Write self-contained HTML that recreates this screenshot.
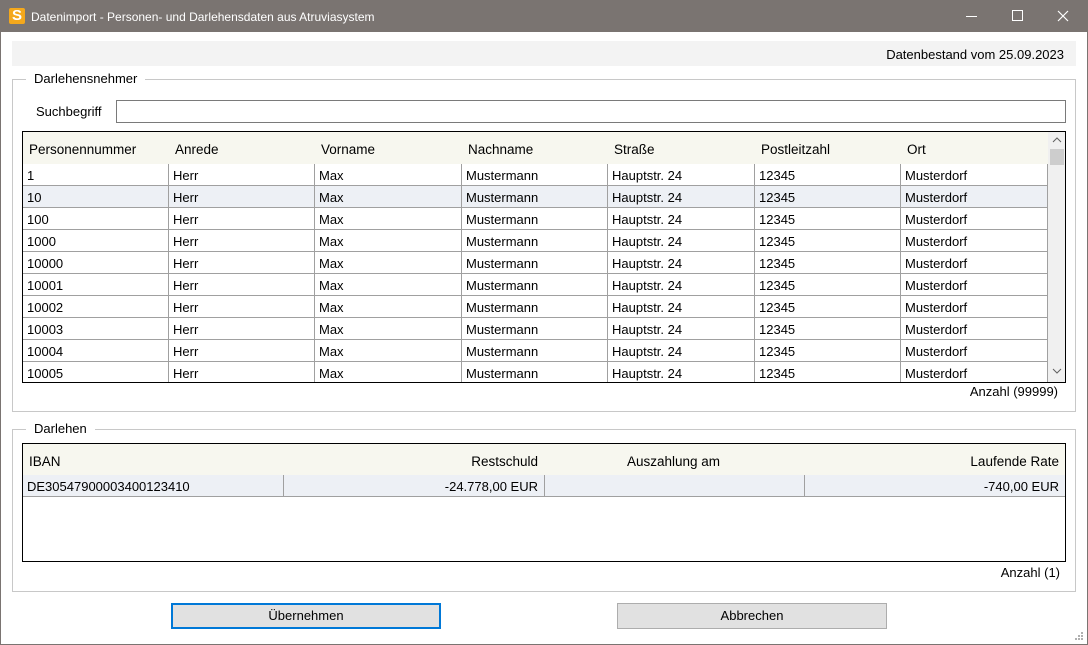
<!DOCTYPE html>
<html><head><meta charset="utf-8"><style>
*{box-sizing:border-box;margin:0;padding:0}
body{width:1088px;height:645px;overflow:hidden;background:#fff;font-family:"Liberation Sans",sans-serif;font-size:13px;color:#000;position:relative}
.a{position:absolute}
.win{left:0;top:0;width:1088px;height:645px;border:1px solid #7a7471;border-top:none}
.title{left:0;top:0;width:1088px;height:32px;background:#7a7471;color:#fff}
.grp{border:1px solid #c8c8c8}
.lbl{background:#fff;padding:0 8px;font-size:13px}
.cell{position:absolute;height:22px;line-height:23px;padding-left:4px;border-right:1px solid #a0a0a0;border-bottom:1px solid #a0a0a0;white-space:nowrap;overflow:hidden}
.hd{position:absolute;line-height:35px;padding-left:6px;font-size:13.5px}
</style></head><body>
<div class="a title">
 <div class="a" style="left:9px;top:8px;width:16px;height:16px;background:#f4a81c;border-radius:2px;color:#fff;font-weight:bold;font-size:15px;line-height:16px;text-align:center">S</div>
 <div class="a" style="left:31px;top:10px;font-size:12px">Datenimport - Personen- und Darlehensdaten aus Atruviasystem</div>
 <div class="a" style="left:966px;top:16px;width:11px;height:1px;background:#fff"></div>
 <div class="a" style="left:1012px;top:10px;width:11px;height:11px;border:1px solid #fff"></div>
 <svg class="a" style="left:1057px;top:10px" width="12" height="12"><path d="M1 1L11 11M11 1L1 11" stroke="#fff" stroke-width="1.2"/></svg>
</div>
<div class="a win" style="top:32px;height:613px"></div>
<div class="a" style="left:12px;top:41px;width:1064px;height:25px;background:#f3f3f3"></div>
<div class="a" style="right:24px;top:47px">Datenbestand vom 25.09.2023</div>

<div class="a grp" style="left:12px;top:79px;width:1064px;height:333px"></div>
<div class="a lbl" style="left:26px;top:71px">Darlehensnehmer</div>
<div class="a" style="left:36px;top:104px">Suchbegriff</div>
<div class="a" style="left:116px;top:100px;width:950px;height:23px;border:1px solid #7a7a7a"></div>

<div class="a" style="left:22px;top:131px;width:1044px;height:252px;border:1px solid #000;overflow:hidden">
 <div class="a" style="left:0;top:0;width:1025px;height:32px;background:#f7f7ef"></div>
 <div id="g1"></div>
 <div class="a" style="left:1025px;top:0;width:18px;height:250px;background:#f0f0f0"></div>
 <div class="a" style="left:1027px;top:17px;width:14px;height:16px;background:#cdcdcd"></div>
 <svg class="a" style="left:1029px;top:5px" width="10" height="6"><path d="M1 5L5 1L9 5" stroke="#606060" fill="none"/></svg>
 <svg class="a" style="left:1029px;top:236px" width="10" height="6"><path d="M1 1L5 5L9 1" stroke="#606060" fill="none"/></svg>
</div>
<div class="a" style="right:30px;top:384px">Anzahl (99999)</div>

<div class="a grp" style="left:12px;top:429px;width:1064px;height:163px"></div>
<div class="a lbl" style="left:26px;top:421px">Darlehen</div>
<div class="a" style="left:22px;top:443px;width:1044px;height:119px;border:1px solid #000;overflow:hidden">
 <div class="a" style="left:0;top:0;width:1042px;height:31px;background:#f7f7ef"></div>
 <div class="hd" style="left:0">IBAN</div>
 <div class="hd" style="left:260px;width:261px;text-align:right;padding-right:6px">Restschuld</div>
 <div class="hd" style="left:521px;width:261px;text-align:center;padding-right:8px">Auszahlung am</div>
 <div class="hd" style="left:782px;width:260px;text-align:right;padding-right:6px">Laufende Rate</div>
 <div class="cell" style="left:0;top:31px;width:261px;background:#edf0f5">DE30547900003400123410</div>
 <div class="cell" style="left:261px;top:31px;width:261px;background:#edf0f5;text-align:right;padding-right:6px">-24.778,00 EUR</div>
 <div class="cell" style="left:522px;top:31px;width:260px;background:#edf0f5"></div>
 <div class="cell" style="left:782px;top:31px;width:260px;background:#edf0f5;text-align:right;padding-right:6px;border-right:none">-740,00 EUR</div>
</div>
<div class="a" style="right:28px;top:565px">Anzahl (1)</div>

<div class="a" style="left:171px;top:603px;width:270px;height:26px;background:#e1e1e1;border:2px solid #0078d7;text-align:center;line-height:22px">Übernehmen</div>
<div class="a" style="left:617px;top:603px;width:270px;height:26px;background:#e1e1e1;border:1px solid #adadad;text-align:center;line-height:24px">Abbrechen</div>
<svg class="a" style="left:1074px;top:631px" width="10" height="10"><g fill="#b0b0b0"><rect x="7" y="1" width="2" height="2"/><rect x="4" y="4" width="2" height="2"/><rect x="7" y="4" width="2" height="2"/><rect x="1" y="7" width="2" height="2"/><rect x="4" y="7" width="2" height="2"/><rect x="7" y="7" width="2" height="2"/></g></svg>

<script>
var xs=[0,146,292,439,585,732,878,1025];
var h=["Personennummer","Anrede","Vorname","Nachname","Straße","Postleitzahl","Ort"];
var ids=["1","10","100","1000","10000","10001","10002","10003","10004","10005"];
var s="";
for(var i=0;i<7;i++)s+='<div class="hd" style="left:'+xs[i]+'px">'+h[i]+'</div>';
for(var r=0;r<10;r++){var v=[ids[r],"Herr","Max","Mustermann","Hauptstr. 24","12345","Musterdorf"];
for(var i=0;i<7;i++)s+='<div class="cell" style="left:'+xs[i]+'px;top:'+(32+r*22)+'px;width:'+(xs[i+1]-xs[i])+'px;'+(r==1?'background:#edf0f5;':'')+'">'+v[i]+'</div>';}
document.getElementById("g1").innerHTML=s;
</script>
</body></html>
